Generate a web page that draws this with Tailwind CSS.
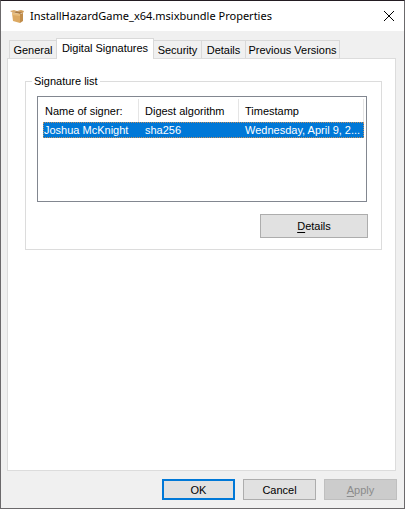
<!DOCTYPE html>
<html lang="en">
<head>
    <meta charset="UTF-8">
    <meta name="viewport" content="width=device-width, initial-scale=1.0">
    <title>InstallHazardGame_x64.msixbundle Properties</title>
    <script src="https://cdn.jsdelivr.net/npm/@tailwindcss/browser@4"></script>
</head>
<body class="min-h-screen flex flex-col bg-[#f0f0f0] border border-[#6b696b] border-t-[#231c22] font-['Liberation_Sans',sans-serif] text-[11px] leading-4 text-black">
    <!-- Title bar -->
    <header class="flex items-center h-[30px] bg-white pl-[9px] pr-[9px] pb-px">
        <svg class="w-4 h-4 shrink-0" viewBox="0 0 16 16" aria-hidden="true">
            <path d="M2 5l8 1v9l-7-2z" fill="#dca962"/>
            <path d="M10 6l3-1v8l-3 2z" fill="#c18d4a"/>
            <path d="M2 4l4-1 7 1-3 2z" fill="#a97a43"/>
            <path d="M0 3l4-1 3 1-4 2z" fill="#d9aa6c"/>
            <path d="M2 5l8 1v2l-8-1z" fill="#e8bd7c"/>
            <path d="M7 3l4-1 3 1-1 2z" fill="#cf9c57"/>
        </svg>
        <h1 class="grow ml-1 font-['Noto_Sans','Open_Sans',sans-serif] whitespace-nowrap">InstallHazardGame_x64.msixbundle Properties</h1>
        <button aria-label="Close" class="p-px">
            <svg class="w-[10px] h-[10px]" viewBox="0 0 10 10" fill="none" stroke="#000"><path d="M0 0l10 10M10 0L0 10"/></svg>
        </button>
    </header>

    <main class="grow flex flex-col px-[6px] pt-[7px]">
        <!-- Tabs -->
        <div role="tablist" class="flex items-end pl-[2px]">
            <button role="tab" class="w-12 h-[18px] border border-b-0 border-[#d9d9d9]">General</button>
            <button role="tab" aria-selected="true" class="relative z-10 w-[98px] h-[21px] -mb-px -ml-px pb-[2px] bg-white border border-b-0 border-[#d9d9d9] whitespace-nowrap">Digital Signatures</button>
            <button role="tab" class="w-12 h-[18px] border border-l-0 border-b-0 border-[#d9d9d9]">Security</button>
            <button role="tab" class="w-11 h-[18px] border border-l-0 border-b-0 border-[#d9d9d9]">Details</button>
            <button role="tab" class="w-[94px] h-[18px] border border-l-0 border-b-0 border-[#d9d9d9] whitespace-nowrap">Previous Versions</button>
        </div>

        <!-- Tab page -->
        <section role="tabpanel" class="grow mr-[2px] bg-white border border-[#dcdcdc] pl-[17px] pr-[13px] pt-[14px]">
            <fieldset class="border border-[#dcdcdc] pl-[11px] pr-[14px] pb-[11px]">
                <legend class="-ml-[5px] px-[2px]">Signature list</legend>
                <div class="mt-[7px] h-[106px] border border-[#828790] pl-[5px] pr-[2px] pt-[2px]">
                    <table class="w-full table-fixed border-separate border-spacing-0 text-left">
                        <thead>
                            <tr class="h-[23px]">
                                <th class="w-24 p-0 pl-[2px] font-normal border-r border-[#e5e5e5]">Name of signer:</th>
                                <th class="w-[100px] p-0 pl-[6px] font-normal border-r border-[#e5e5e5]">Digest algorithm</th>
                                <th class="p-0 pl-[6px] font-normal border-r border-[#e5e5e5]">Timestamp</th>
                            </tr>
                        </thead>
                        <tbody>
                            <tr class="bg-[#0078d7] text-white outline-1 -outline-offset-1 outline-dotted outline-[#c09060]">
                                <td class="p-0 pl-px">Joshua McKnight</td>
                                <td class="p-0 pl-[6px]">sha256</td>
                                <td class="p-0 pl-[6px] whitespace-nowrap">Wednesday, April 9, 2...</td>
                            </tr>
                        </tbody>
                    </table>
                </div>
                <div class="flex justify-end mt-3 -mr-px">
                    <button class="w-[108px] h-6 bg-[#e1e1e1] border border-[#adadad]"><u class="underline-offset-2">D</u>etails</button>
                </div>
            </fieldset>
        </section>
    </main>

    <!-- Dialog buttons -->
    <footer class="flex justify-end gap-2 px-[7px] pt-2 pb-[8px]">
        <button class="w-[73px] h-[21px] bg-[#e1e1e1] border-2 border-[#0078d7]">OK</button>
        <button class="w-[73px] h-[21px] bg-[#e1e1e1] border border-[#adadad]">Cancel</button>
        <button disabled class="w-[73px] h-[21px] bg-[#cccccc] border border-[#bfbfbf] text-[#8b8b8b]"><u class="underline-offset-2">A</u>pply</button>
    </footer>
</body>
</html>
